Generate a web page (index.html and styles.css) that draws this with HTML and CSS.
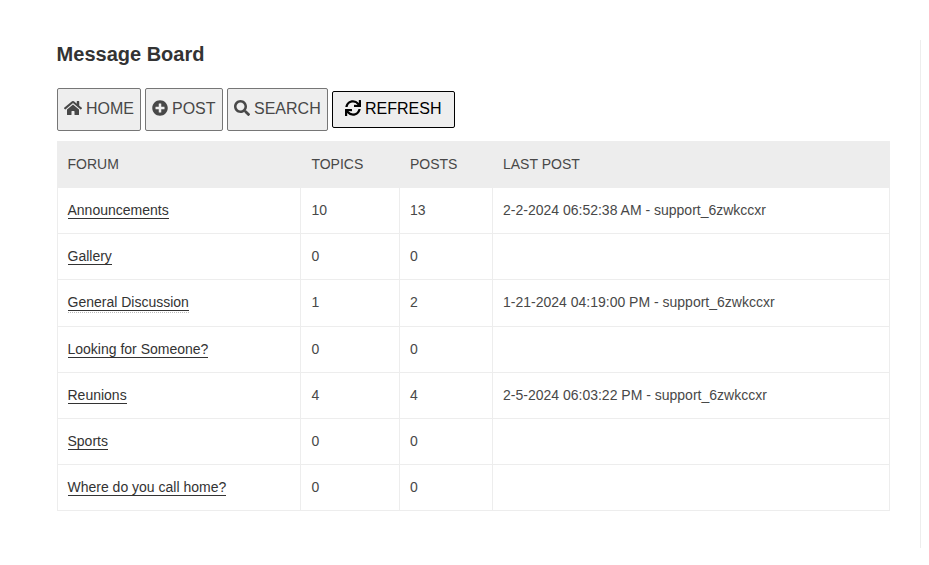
FILE: index.html
```html
<!DOCTYPE html>
<html lang="en">
<head>
<meta charset="utf-8">
<title>Message Board</title>
<link rel="stylesheet" href="styles.css">
</head>
<body>
<main class="content">
  <h1 class="title">Message Board</h1>
  <div class="toolbar">
    <button class="btn btn-home"><svg class="icon icon-wide" viewBox="0 0 576 512"><path d="M280.37 148.26L96 300.11V464a16 16 0 0 0 16 16l112.06-.29a16 16 0 0 0 15.92-16V368a16 16 0 0 1 16-16h64a16 16 0 0 1 16 16v95.64a16 16 0 0 0 16 16.05L464 480a16 16 0 0 0 16-16V300L295.67 148.26a12.19 12.19 0 0 0-15.3 0zM571.6 251.47L488 182.56V44.05a12 12 0 0 0-12-12h-56a12 12 0 0 0-12 12v72.61L318.47 43a48 48 0 0 0-61 0L4.34 251.47a12 12 0 0 0-1.6 16.9l25.5 31A12 12 0 0 0 45.15 301l235.22-193.74a12.19 12.19 0 0 1 15.3 0L530.9 301a12 12 0 0 0 16.9-1.6l25.5-31a12 12 0 0 0-1.7-16.93z"/></svg><span>HOME</span></button>
    <button class="btn btn-post"><svg class="icon" viewBox="0 0 512 512"><path d="M256 8C119 8 8 119 8 256s111 248 248 248 248-111 248-248S393 8 256 8zm144 276c0 6.600-5.400 12-12 12h-92v92c0 6.600-5.400 12-12 12h-56c-6.600 0-12-5.400-12-12v-92h-92c-6.600 0-12-5.400-12-12v-56c0-6.600 5.400-12 12-12h92v-92c0-6.600 5.400-12 12-12h56c6.600 0 12 5.400 12 12v92h92c6.600 0 12 5.400 12 12v56z"/></svg><span>POST</span></button>
    <button class="btn btn-search"><svg class="icon" viewBox="0 0 512 512"><path d="M505 442.700L405.300 343c-4.500-4.500-10.600-7-17-7H372c27.600-35.300 44-79.700 44-128C416 93.100 322.900 0 208 0S0 93.100 0 208s93.100 208 208 208c48.300 0 92.700-16.400 128-44v16.300c0 6.400 2.500 12.500 7 17l99.700 99.700c9.400 9.400 24.600 9.400 33.900 0l28.300-28.300c9.400-9.400 9.400-24.600.1-34zM208 336c-70.700 0-128-57.200-128-128 0-70.700 57.200-128 128-128 70.700 0 128 57.200 128 128 0 70.700-57.200 128-128 128z"/></svg><span>SEARCH</span></button>
    <button class="btn btn-refresh"><svg class="icon" viewBox="0 0 512 512"><path d="M440.650 12.570l4 82.770A247.160 247.160 0 0 0 255.830 8C134.730 8 33.910 94.920 12.290 209.820A12 12 0 0 0 24.090 224h49.050a12 12 0 0 0 11.670-9.260 175.910 175.910 0 0 1 317-56.940l-101.460-4.860a12 12 0 0 0-12.570 12v47.410a12 12 0 0 0 12 12H500a12 12 0 0 0 12-12V12a12 12 0 0 0-12-12h-47.370a12 12 0 0 0-11.980 12.570zM255.830 432a175.610 175.610 0 0 1-146-77.800l101.800 4.870a12 12 0 0 0 12.570-12v-47.400a12 12 0 0 0-12-12H12a12 12 0 0 0-12 12V500a12 12 0 0 0 12 12h47.350a12 12 0 0 0 12-12.600l-4.150-82.570A247.170 247.170 0 0 0 255.830 504c121.110 0 221.930-86.920 243.550-201.820a12 12 0 0 0-11.800-14.180h-49.050a12 12 0 0 0-11.670 9.260A175.860 175.860 0 0 1 255.830 432z"/></svg><span>REFRESH</span></button>
  </div>
  <table class="forums">
    <colgroup><col class="col-forum"><col class="col-topics"><col class="col-posts"><col></colgroup>
    <thead>
      <tr><th>FORUM</th><th>TOPICS</th><th>POSTS</th><th>LAST POST</th></tr>
    </thead>
    <tbody>
      <tr><td><a class="link">Announcements</a></td><td>10</td><td>13</td><td>2-2-2024 06:52:38 AM - support_6zwkccxr</td></tr>
      <tr><td><a class="link">Gallery</a></td><td>0</td><td>0</td><td></td></tr>
      <tr class="tall"><td><span class="hint"><a class="link">General Discussion</a></span></td><td>1</td><td>2</td><td>1-21-2024 04:19:00 PM - support_6zwkccxr</td></tr>
      <tr><td><a class="link">Looking for Someone?</a></td><td>0</td><td>0</td><td></td></tr>
      <tr><td><a class="link">Reunions</a></td><td>4</td><td>4</td><td>2-5-2024 06:03:22 PM - support_6zwkccxr</td></tr>
      <tr><td><a class="link">Sports</a></td><td>0</td><td>0</td><td></td></tr>
      <tr><td><a class="link">Where do you call home?</a></td><td>0</td><td>0</td><td></td></tr>
    </tbody>
  </table>
</main>
</body>
</html>
```
FILE: styles.css
```css
* { box-sizing: border-box; }

body {
  margin: 0;
  background: #fff;
  color: #484848;
  font: 14px/20px "Liberation Sans", Arial, sans-serif;
}

.content {
  width: 921px;
  height: 508px;
  margin-top: 40px;
  padding: 0 30px 0 57px;
  border-right: 1px solid #ededed;
}

.title {
  margin: 0 0 0 -0.4px;
  padding-top: 2px;
  height: 48px;
  color: #333;
  font-size: 20px;
  line-height: 24px;
}

.toolbar {
  display: flex;
  align-items: center;
  gap: 4px;
  height: 43px;
  margin-bottom: 10px;
}

.btn {
  display: flex;
  align-items: center;
  gap: 4px;
  height: 43px;
  padding: 0 0 2px 6px;
  border: 1px solid #767676;
  border-radius: 2px;
  background: #eee;
  color: #484848;
  font: 16px/20px "Liberation Sans", Arial, sans-serif;
  white-space: nowrap;
}

.btn-home { width: 84px; }
.btn-post { width: 78px; }
.btn-search { width: 101px; }

.btn-refresh {
  width: 123px;
  height: 37px;
  padding-left: 12px;
  border-color: #000;
  color: #000;
}

.icon {
  flex: none;
  width: 16px;
  height: 16px;
  margin-bottom: 2px;
  fill: currentColor;
}

.icon-wide { width: 18px; }

.forums {
  width: 833px;
  table-layout: fixed;
  border-collapse: separate;
  border-spacing: 0;
  border-left: 1px solid #ededed;
}

.col-forum { width: 243px; }
.col-topics { width: 99px; }
.col-posts { width: 93px; }

th,
td {
  height: 46px;
  padding: 0 10px 2px;
  text-align: left;
  vertical-align: middle;
}

th:first-child,
td:first-child { padding-left: 9.5px; }

th:nth-child(2),
td:nth-child(2) { padding-left: 10.4px; }

th {
  height: 47px;
  background: #ededed;
  font-weight: normal;
}

td {
  border-right: 1px solid #ededed;
  border-bottom: 1px solid #ededed;
}

.tall td { height: 47px; }

.link {
  border-bottom: 1px solid #333;
  color: #333;
}

.hint {
  padding-bottom: 2px;
  border-bottom: 1px dotted #bbb;
}
```
